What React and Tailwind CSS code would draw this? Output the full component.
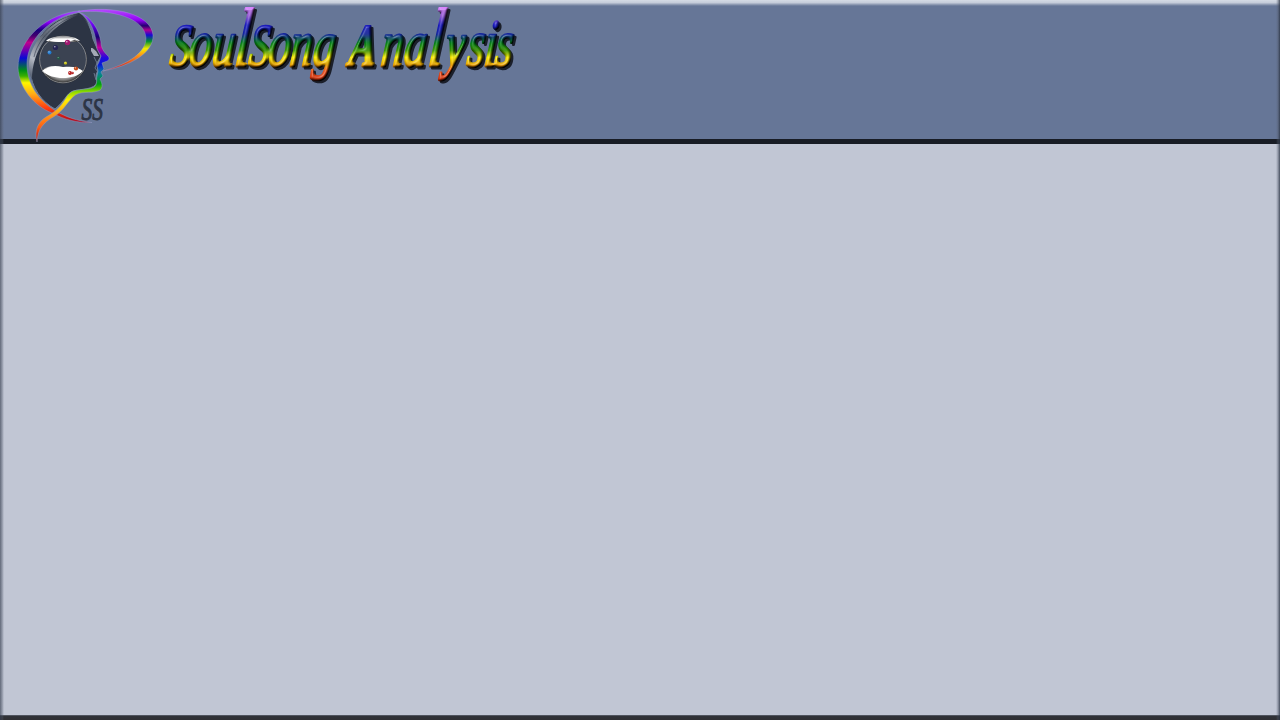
const letters = [
  ['S', 169, 60], ['o', 188, 67], ['u', 211, 67], ['l', 233.5, 83], ['S', 248, 60], ['o', 267, 67], ['n', 289, 66], ['g', 312, 65],
  [' ', 336, 60], ['A', 348, 60], ['n', 380, 66], ['a', 403, 66], ['l', 427, 83], ['y', 444, 65], ['s', 466, 67], ['i', 483, 67], ['s', 494, 67],
];

const beads = [
  [67.5, 42.5, 2.7, '#a01870'],
  [55.5, 47.5, 2.6, '#252455'],
  [49.5, 52.5, 2, '#217bd0'],
  [58.5, 58, 1.6, '#235b46'],
  [65.5, 63, 1.6, '#c9c51d'],
  [76, 68.5, 2.1, '#c64b18'],
  [70, 73, 1.9, '#b72424'],
  [72.5, 73, 1.3, '#b72424'],
];

function Logo() {
  return (
    <svg className="block h-[144px] w-[160px] shrink-0 overflow-visible" viewBox="0 0 160 144" role="img" aria-label="SoulSong">
      <defs>
        <linearGradient id="band" gradientUnits="userSpaceOnUse" x1="0" y1="10" x2="0" y2="122">
          <stop offset="0" stopColor="#a64dff" />
          <stop offset=".11" stopColor="#8b00f5" />
          <stop offset=".18" stopColor="#18007a" />
          <stop offset=".23" stopColor="#42006e" />
          <stop offset=".29" stopColor="#c0008c" />
          <stop offset=".36" stopColor="#6d00b0" />
          <stop offset=".43" stopColor="#0909d5" />
          <stop offset=".54" stopColor="#009016" />
          <stop offset=".59" stopColor="#39b000" />
          <stop offset=".65" stopColor="#fff600" />
          <stop offset=".75" stopColor="#ffac18" />
          <stop offset=".87" stopColor="#ff4010" />
          <stop offset="1" stopColor="#b00018" />
        </linearGradient>
        <linearGradient id="ring" gradientUnits="userSpaceOnUse" x1="0" y1="9" x2="0" y2="71">
          <stop offset="0" stopColor="#b64cff" />
          <stop offset=".18" stopColor="#9300f5" />
          <stop offset=".27" stopColor="#240070" />
          <stop offset=".34" stopColor="#b00090" />
          <stop offset=".42" stopColor="#1708d5" />
          <stop offset=".52" stopColor="#009030" />
          <stop offset=".64" stopColor="#f6ed00" />
          <stop offset=".76" stopColor="#ff8c14" />
          <stop offset="1" stopColor="#b80c2e" />
        </linearGradient>
        <linearGradient id="face" gradientUnits="userSpaceOnUse" x1="0" y1="12" x2="0" y2="143">
          <stop offset="0" stopColor="#a44aff" />
          <stop offset=".1" stopColor="#6a00f0" />
          <stop offset=".19" stopColor="#180073" />
          <stop offset=".27" stopColor="#c4009a" />
          <stop offset=".35" stopColor="#2208e0" />
          <stop offset=".4" stopColor="#0716d8" />
          <stop offset=".46" stopColor="#087da5" />
          <stop offset=".55" stopColor="#00a010" />
          <stop offset=".61" stopColor="#8dda00" />
          <stop offset=".67" stopColor="#fff200" />
          <stop offset=".78" stopColor="#ff9c18" />
          <stop offset=".88" stopColor="#ff5e14" />
          <stop offset="1" stopColor="#b40010" />
        </linearGradient>
        <linearGradient id="metal" gradientUnits="userSpaceOnUse" x1="78" y1="14" x2="30" y2="82">
          <stop offset="0" stopColor="#2f3644" />
          <stop offset=".2" stopColor="#8b919d" />
          <stop offset=".45" stopColor="#5b6371" />
          <stop offset=".75" stopColor="#b4b9c3" />
          <stop offset="1" stopColor="#39445a" />
        </linearGradient>
        <radialGradient id="orb" cx=".5" cy=".5" r=".5">
          <stop offset=".4" stopColor="#fff" />
          <stop offset=".65" stopColor="#eee" />
          <stop offset=".86" stopColor="#777" />
          <stop offset="1" stopColor="#161616" />
        </radialGradient>
        <linearGradient id="cap" x1="0" y1="0" x2="0" y2="1">
          <stop offset="0" stopColor="#777" />
          <stop offset=".5" stopColor="#fff" />
        </linearGradient>
        <filter id="soft"><feGaussianBlur stdDeviation=".65" /></filter>
      </defs>
      <path d="M79 13C86 18 91 27 93 39L96 46L101 56L97 63L98 70L96 75L97 82C95 90 80 89 73 91C66 94 65 101 55 109C42 102 31 88 30 69C30 41 49 18 79 13Z" fill="#2c3444" stroke="#718096" strokeWidth="1" />
      <path d="M79 13C54 18 29 41 29 66C29 71 30 76 32 80C32 50 50 26 78 15C84 18 87 22 89 27C88 21 84 16 79 13Z" fill="url(#metal)" filter="url(#soft)" />
      <path d="M34 57C38 39 53 24 75 16" fill="none" stroke="#343d4e" strokeWidth=".6" />
      <path d="M91 48C94 48 94 50 96 51L99 56L94 56L91 51Z" fill="#a4aab6" filter="url(#soft)" />
      <path d="M94 57L97 63L95 68L98 72M94 73L96 80" fill="none" stroke="#68758b" strokeWidth="1" />
      <path d="M80 10.7C48 13 18 38 18 68C19 88 34 106 52 113C65 120 78 123 92 122.5C77 121 66 117 56 111C38 100 27 84 27 64C27 39 50 17 80 12Z" fill="url(#band)" stroke="#8999c0" strokeWidth=".5" />
      <path d="M78 11.3C114 5 151 14 153 35C154 53 130 66 103 71C129 64 146 52 146 38C145 18 112 9 78 12Z" fill="url(#ring)" stroke="#a3aed5" strokeWidth=".35" />
      <path d="M79 12C92 17 99 30 101 42C101 48 104 52 108 56C110 58 109 61 106 61.5L102 63L104 69L101 72L103 76L100 79C103 84 103 90 98 91C90 94 80 90 73 97C66 104 62 113 50 119C40 126 38 132 37 142C34 130 38 122 46 117C58 110 62 105 67 96C73 87 87 91 94 87C98 84 96 80 97 76L98 71L97 66L99 62L101 56L97 49C96 35 92 20 79 12Z" fill="url(#face)" stroke="#8d9dbc" strokeWidth=".5" />
      <circle cx="63" cy="59.5" r="24" fill="url(#orb)" />
      <path d="M46.5 42H79.5C84 47 86.5 53 86 59.5C86 64 85 68 83 71C79 67 72 66 63 67C55 65 47 66 42 70C38 60 40 48 46.5 42Z" fill="#3b4352" />
      <path d="M42 71C49 65 57 67 63 69C70 66 78 67 83 71C78 76 71 78 63 78C55 78 48 76 42 71Z" fill="#fff" />
      <path d="M46 41C52 35 73 34 80 41L74 40C66 43 59 42 46 41Z" fill="url(#cap)" />
      <circle cx="63" cy="59.5" r="23.4" fill="none" stroke="#a5a8ad" strokeWidth=".7" />
      {beads.map(([x, y, r, color]) => (
        <g key={`${x}-${y}`}>
          <circle cx={x} cy={y} r={r} fill={color} />
          <circle cx={x - r * 0.25} cy={y - r * 0.3} r={r * 0.28} fill="#fff" opacity=".75" />
        </g>
      ))}
      <text transform="translate(81.5 120) scale(.67 1)" fontFamily="Liberation Serif, serif" fontStyle="italic" fontSize="32" fill="#2c3444" stroke="#2c3444" strokeWidth="1">SS</text>
    </svg>
  );
}

function Title() {
  return (
    <svg className="block h-[100px] w-[370px] shrink-0 overflow-visible" viewBox="160 0 370 100">
      <defs>
        <linearGradient id="rainbow" gradientUnits="userSpaceOnUse" x1="0" y1="-59" x2="0" y2="16">
          <stop offset="0" stopColor="#d982ff" />
          <stop offset=".12" stopColor="#8d54cd" />
          <stop offset=".24" stopColor="#1616b8" />
          <stop offset=".36" stopColor="#10209a" />
          <stop offset=".48" stopColor="#007c14" />
          <stop offset=".58" stopColor="#3b9400" />
          <stop offset=".67" stopColor="#f6e900" />
          <stop offset=".77" stopColor="#e6a000" />
          <stop offset=".86" stopColor="#e64a18" />
          <stop offset="1" stopColor="#c52809" />
        </linearGradient>
        <filter id="bevel" filterUnits="userSpaceOnUse" x="155" y="-5" width="380" height="105" colorInterpolationFilters="sRGB">
          <feGaussianBlur in="SourceAlpha" stdDeviation="1.3" result="height" />
          <feDiffuseLighting in="height" surfaceScale="2.2" diffuseConstant="1.22" lightingColor="#fff" result="shade">
            <feDistantLight azimuth="235" elevation="50" />
          </feDiffuseLighting>
          <feComposite in="SourceGraphic" in2="shade" operator="arithmetic" k1="1.02" result="lit" />
          <feSpecularLighting in="height" surfaceScale="2.4" specularConstant=".38" specularExponent="14" lightingColor="#fff" result="shine">
            <feDistantLight azimuth="235" elevation="40" />
          </feSpecularLighting>
          <feComposite in="shine" in2="SourceAlpha" operator="in" result="gloss" />
          <feOffset in="SourceAlpha" dx="2" dy="2" />
          <feGaussianBlur stdDeviation=".6" result="dropped" />
          <feFlood floodColor="#1b1f2a" />
          <feComposite in2="dropped" operator="in" result="shadow" />
          <feMerge>
            <feMergeNode in="shadow" />
            <feMergeNode in="lit" />
            <feMergeNode in="gloss" />
          </feMerge>
        </filter>
      </defs>
      <g filter="url(#bevel)">
        <text transform="translate(0 66) skewX(-6) scale(.68 1)" y="0" fontFamily="Liberation Serif, serif" fontStyle="italic" fill="url(#rainbow)" stroke="url(#rainbow)" strokeWidth="3" strokeLinejoin="round">
          {letters.map(([letter, x, size], index) => (
            <tspan key={index} x={x / 0.68} fontSize={size} fontWeight={letter === 'A' ? 700 : 400}>{letter}</tspan>
          ))}
        </text>
      </g>
    </svg>
  );
}

export default function App() {
  return (
    <div className="relative flex h-screen w-full flex-col overflow-hidden bg-[#c1c6d4]">
      <header className="flex h-36 shrink-0 items-start border-b-[5px] border-[#181c25] bg-[#667697]">
        <Logo />
        <h1><Title /></h1>
      </header>
      <main className="flex-1" />
      <footer className="h-[5px] shrink-0 bg-[linear-gradient(#656b77,#303238_25%,#303033)]" />
      <div className="pointer-events-none absolute inset-x-0 top-0 h-1.5 bg-[linear-gradient(#d5dbe5,#c5ccda_45%,#8f9bb3_75%,transparent)]" />
      <div className="pointer-events-none absolute inset-y-0 left-0 w-1 bg-[linear-gradient(to_right,#373f50b0,#51596b60_60%,transparent)]" />
      <div className="pointer-events-none absolute inset-y-0 right-0 w-1 bg-[linear-gradient(to_left,#293242d0,#51596b70_50%,transparent)]" />
    </div>
  );
}
